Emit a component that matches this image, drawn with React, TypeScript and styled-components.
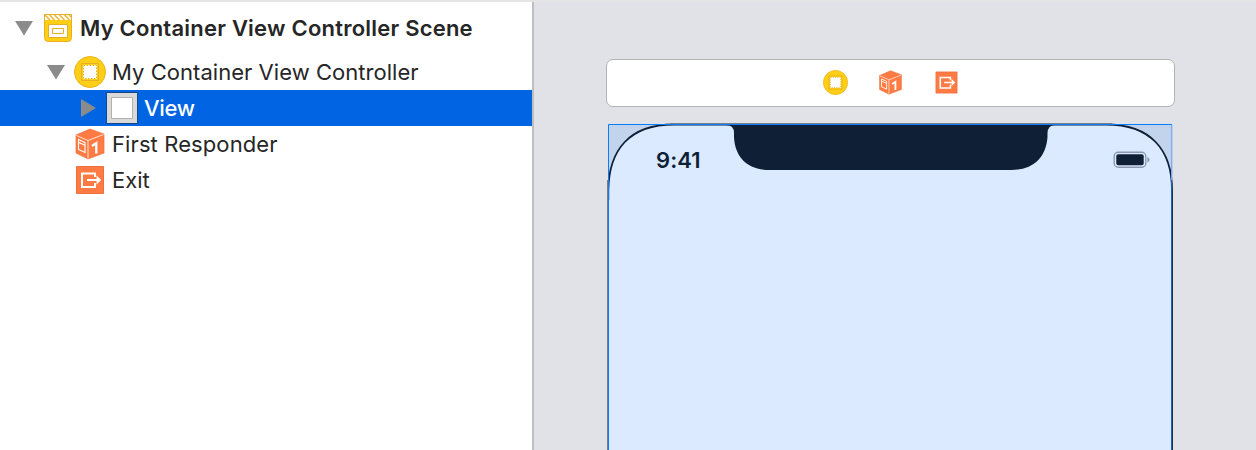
import React from 'react';
import styled, { createGlobalStyle } from 'styled-components';

const GlobalStyle = createGlobalStyle`
  body { margin: 0; overflow: hidden; }
  * { box-sizing: border-box; }
`;

const Window = styled.div`
  display: flex;
  width: 1256px;
  height: 450px;
  overflow: hidden;
  border-top: 2px solid #e4e4e4;
  background: #e1e2e7;
  font-family: Inter, 'Liberation Sans', sans-serif;
`;

const Outline = styled.nav`
  width: 534px;
  flex: none;
  background: #fff;
  border-right: 2px solid #bebebf;
`;

const Row = styled.div<{ $indent: number; $selected?: boolean; $height?: number }>`
  display: flex;
  align-items: center;
  height: ${p => p.$height ?? 36}px;
  padding-left: ${p => p.$indent}px;
  background: ${p => (p.$selected ? '#0064e3' : 'transparent')};
  color: ${p => (p.$selected ? '#fff' : '#262626')};
`;

const Label = styled.span<{ $weight?: number; $spacing?: number }>`
  margin-left: 6px;
  font-size: 22px;
  line-height: 32px;
  font-weight: ${p => p.$weight ?? 400};
  letter-spacing: ${p => p.$spacing ?? 0}px;
  white-space: nowrap;
`;

const Arrow = styled.svg`
  width: 18px;
  height: 18px;
  flex: none;
  margin-right: 9px;
  fill: #8b8b8b;
`;

const Icon = styled.svg<{ $size?: number }>`
  display: block;
  flex: none;
  width: ${p => p.$size ?? 32}px;
  height: ${p => p.$size ?? 32}px;
`;

const Canvas = styled.main`
  flex: 1;
  display: flex;
  flex-direction: column;
  padding: 57px 0 0 72px;
`;

const Dock = styled.div`
  display: flex;
  align-items: center;
  justify-content: center;
  gap: 30.5px;
  width: 569px;
  height: 48px;
  background: #fff;
  border: 1.5px solid #b3b3b4;
  border-radius: 7px;
`;

const Device = styled.div`
  position: relative;
  width: 570px;
  height: 330px;
  margin-top: 15px;
`;

const Bezel = styled.svg`
  position: absolute;
  inset: 0;
`;

const StatusBar = styled.div`
  position: relative;
  display: flex;
  justify-content: space-between;
  align-items: center;
  padding: 23px 25px 0 50px;
  height: 54px;
  color: #0e1f36;
`;

const Clock = styled.span`
  font-size: 22px;
  line-height: 28px;
  font-weight: 600;
  letter-spacing: 0.1px;
`;

const Disclosure = ({ open }: { open?: boolean }) => (
  <Arrow viewBox="0 0 18 18">
    <path d={open ? 'M0 2H18L9 16.5Z' : 'M2 0L17 9L2 18Z'} />
  </Arrow>
);

const SceneIcon = () => (
  <Icon viewBox="0 0 32 32">
    <path d="M2.5 2.5H29.5V25.5Q29.5 29.5 26 29.5H6Q2.5 29.5 2.5 25.5Z" fill="#ffcf16" stroke="#e7ae28" />
    <path d="M3 3H29V8H3Z" fill="#fff" />
    <path d="M3 3L8 8M7.500 3L12.500 8M12.500 3L17.500 8M17.500 3L22.500 8M22.500 3L27.500 8M27 3L29 5" stroke="#edb638" strokeWidth="1.6" />
    <path d="M2.5 8.500V2.500H29.500V8.500" fill="none" stroke="#e7ae28" />
    <path d="M6.500 12.500H25.500V25.500H6.500Z" fill="#fff" stroke="#e7ae28" />
    <path d="M10.500 16.500H21.500V21.500H10.500Z" fill="#fff" stroke="#e7ae28" />
  </Icon>
);

const ControllerIcon = ({ size }: { size?: number }) => (
  <Icon $size={size} viewBox="0 0 32 32">
    <circle cx="16" cy="16" r="15.500" fill="#ffcf16" stroke="#edb21c" />
    <path d="M7.500 7.500H24.500V24.500H7.500Z" fill="#ffcf16" stroke="#e7ae28" />
    <path d="M9 9H23V23H9Z" fill="#fff" />
    <path d="M9.500 9.500H22.500V22.500H9.500Z" fill="none" stroke="#e7ae28" strokeDasharray="1.500 1.500" />
  </Icon>
);

const ViewIcon = () => (
  <Icon viewBox="0 0 32 32">
    <path d="M.5 .5H31.5V31.5H.5Z" fill="#d9d9d9" stroke="#17468a" />
    <path d="M5.5 5.5H26.5V26.5H5.5Z" fill="#fff" stroke="#b2b2b2" />
  </Icon>
);

const ResponderIcon = ({ size }: { size?: number }) => (
  <Icon $size={size} viewBox="0 0 32 32">
    <path d="M2 7L16 1L30 6V25L14 31L2 25Z" fill="#ff7b43" stroke="#e87442" strokeWidth=".7" />
    <path d="M2.500 7.500L14 12.500L29.500 6.500M14 12.500V30.500" fill="none" stroke="#ffe3d7" strokeWidth="1" />
    <path d="M4.500 11.500L11 14.500V24.500L4.500 21.500ZM4.500 14.200L11 17.200" fill="none" stroke="#fff" strokeWidth="1.100" />
    <path d="M18 18L22.300 15.200V25.600" fill="none" stroke="#fff" strokeWidth="2.300" />
  </Icon>
);

const ExitIcon = ({ size }: { size?: number }) => (
  <Icon $size={size} viewBox="0 0 32 32">
    <path d="M2.500 2.500H29.500V29.500H2.500Z" fill="#ff7b43" stroke="#eb7040" />
    <path d="M21 13V9.500H8V23H21V19" fill="none" stroke="#fff" strokeWidth="2" />
    <path d="M13 16H24" fill="none" stroke="#fff" strokeWidth="2" />
    <path d="M22.500 11.500L27.200 16L22.500 20.500Z" fill="#fff" />
  </Icon>
);

const Battery = () => (
  <svg width="38" height="18" viewBox="0 0 38 18">
    <rect x="1.200" y="1.200" width="31.600" height="15" rx="4" fill="none" stroke="#8b9ab2" strokeWidth="1.400" />
    <rect x="3.300" y="3.300" width="27.400" height="10.900" rx="2" fill="#0e1f36" />
    <path d="M34.500 6Q36.500 7 36.500 8.800Q36.500 10.500 34.500 11.500Z" fill="#7f8fa8" />
  </svg>
);

export default function App() {
  return (
    <Window>
      <GlobalStyle />
      <Outline>
        <Row $indent={15} $height={52}>
          <Disclosure open />
          <SceneIcon />
          <Label $weight={600} $spacing={0.22}>My Container View Controller Scene</Label>
        </Row>
        <Row $indent={47}>
          <Disclosure open />
          <ControllerIcon />
          <Label $spacing={0.04}>My Container View Controller</Label>
        </Row>
        <Row $indent={79} $selected>
          <Disclosure />
          <ViewIcon />
          <Label $weight={500} $spacing={-0.3}>View</Label>
        </Row>
        <Row $indent={74}>
          <ResponderIcon />
          <Label $spacing={0.1}>First Responder</Label>
        </Row>
        <Row $indent={74}>
          <ExitIcon />
          <Label>Exit</Label>
        </Row>
      </Outline>
      <Canvas>
        <Dock>
          <ControllerIcon size={25} />
          <ResponderIcon size={25} />
          <ExitIcon size={25} />
        </Dock>
        <Device>
          <Bezel width="570" height="330" viewBox="606 122 570 330">
            <path d="M608 124H1172V460H608Z" fill="#c2d4eb" />
            <path d="M608.300 460V190C609 150 629 124.500 674 124.500H1106C1151 124.500 1172 150 1172 190V460Z" fill="#dbeaff" stroke="#0e1f36" strokeWidth="1.800" />
            <path d="M726 125Q734 125 734 133V137C735 158 748 170 770 170H1011C1033 170 1046 158 1047.500 137V133Q1048 125 1055 125Z" fill="#0e1f36" />
            <path d="M670 123.500H1112" stroke="#777f88" />
            <path d="M607.500 180V460" stroke="#777f88" />
            <path d="M608.500 460V124.500H1172" fill="none" stroke="#0a7cff" />
            <path d="M609.500 200V460" stroke="#dbeaff" />
            <path d="M1171.700 125V180" stroke="#76acf5" strokeWidth="1.300" />
            <path d="M1171.500 180V460" stroke="#1463c0" />
          </Bezel>
          <StatusBar>
            <Clock>9:41</Clock>
            <Battery />
          </StatusBar>
        </Device>
      </Canvas>
    </Window>
  );
}
